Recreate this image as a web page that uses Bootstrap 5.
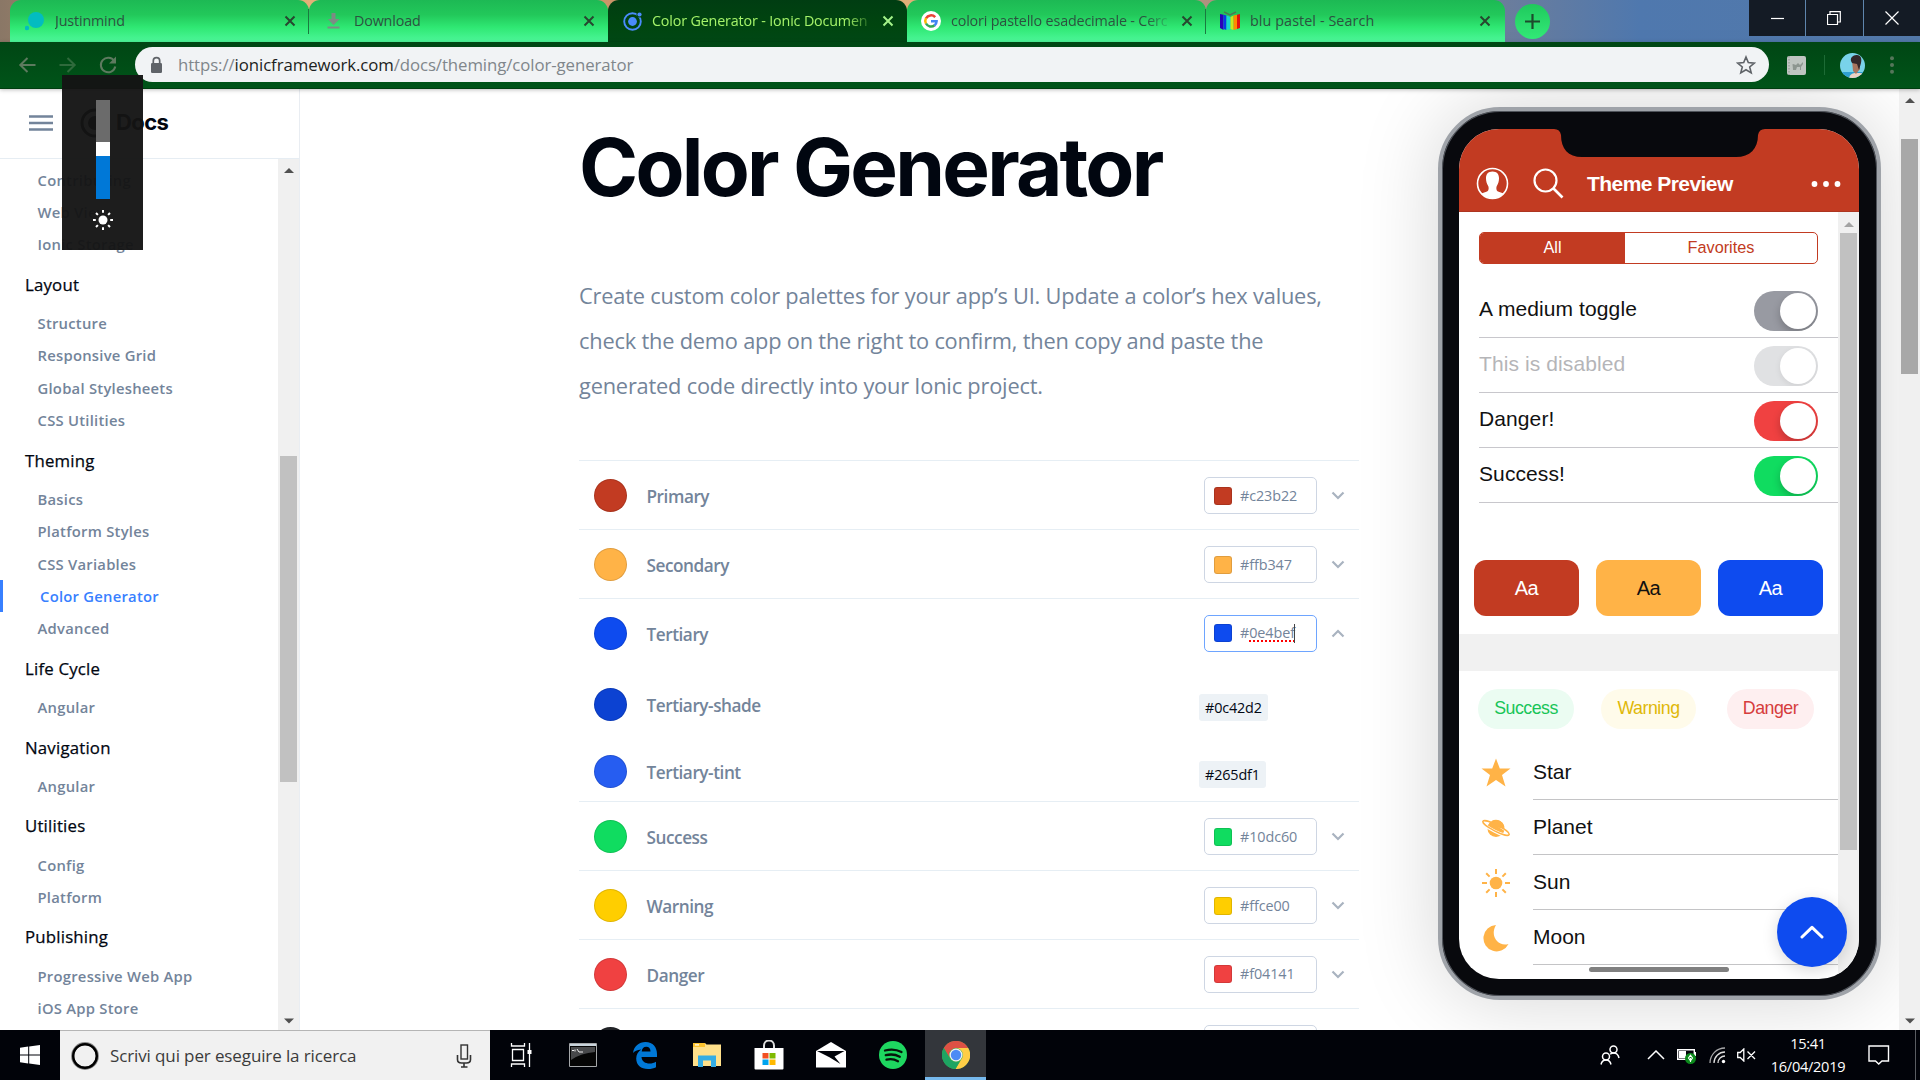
<!DOCTYPE html>
<html lang="en">
<head>
<meta charset="utf-8">
<title>Color Generator - Ionic Documentation</title>
<link href="https://cdn.jsdelivr.net/npm/bootstrap@5.3.0/dist/css/bootstrap.min.css" rel="stylesheet">
<style>
  body { width:1920px; height:1080px; overflow:hidden; font-family:"Open Sans","Noto Sans",sans-serif; background:#fff; color:#010610; }
  svg { display:block; flex:none; }
  .nw { white-space:nowrap; }
  /* tab strip */
  .tabstrip { height:42px; padding-left:10px; background:linear-gradient(90deg,#8a7766 0,#e3b078 310px,#c99468 620px,#e3b078 920px,#a58b80 1260px,#6b7d9c 1505px,#4f78ae 1640px,#5379a9 1920px); }
  .btab { width:299px; height:42px; padding-left:17px; padding-right:13px; border-radius:11px 11px 0 0; background:linear-gradient(180deg,#1db954 0,#22c85a 35%,#2fe873 65%,#4df79a 100%); color:#2c5240; font-size:14.3px; letter-spacing:-.15px; line-height:42px; position:relative; }
  .btab .ttl { flex:1; overflow:hidden; white-space:nowrap; margin-left:10px; margin-right:8px; }
  .btab.fade-end .ttl { letter-spacing:-.15px; -webkit-mask-image:linear-gradient(90deg,#000 88%,transparent 100%); }
  .btab.sep::after { content:""; position:absolute; right:0; top:9px; width:1px; height:25px; background:#1a7a40; }
  .btab.current { background:linear-gradient(180deg,#003d12,#00450f 60%,#004715); color:#a4f36a; }
  .plus { width:35px; height:35px; border-radius:50%; background:linear-gradient(#1fc95c,#33ea78); margin:4px 0 0 10px; }
  .winbtns { height:36px; margin-left:auto; background:#141b25; width:171px; }
  .winbtns > div { flex:1; border-left:1px solid #5f86ad; }
  .winbtns > div:first-child { border-left:0; }
  /* toolbar */
  .tbar { height:47px; background:linear-gradient(#004614,#005419); border-bottom:1px solid #003d10; padding-left:17px; box-shadow:0 1px 4px rgba(0,0,0,.25); position:relative; }
  .omni { width:1634px; height:35px; border-radius:18px; background:#f1f3f5; margin:0 0 1px 12px; padding:0 13px 0 14px; color:#80868b; font-size:16.8px; letter-spacing:-.15px; }
  .omni b { font-weight:400; color:#1c1e21; }
  /* page */
  .pagearea { height:941px; }
  .sideb { width:300px; border-right:1px solid #e9edf2; }
  .sidehead { height:70px; border-bottom:1px solid #e6edf3; padding:0 0 2px 29px; }
  .docs { font-family:Inter,sans-serif; font-weight:700; font-size:22px; letter-spacing:-.6px; }
  .sidelist { flex:1; padding-top:4.600px; overflow:hidden; }
  .sidelist a { display:block; height:32.4px; line-height:32px; padding-left:37.5px; font-size:14.8px; font-weight:600; letter-spacing:.25px; color:#73849a; text-decoration:none; white-space:nowrap; }
  .sidelist h6 { margin:0; height:46.3px; line-height:47px; padding-left:25px; font-size:16.8px; font-weight:500; color:#010610; letter-spacing:.2px; -webkit-text-stroke:.25px #010610; }
  .sidelist a.on { color:#3880ff; border-left:3px solid #3880ff; padding-left:37px; }
  .sbar { width:21px; background:#f0f0f0; padding:9px 0 6px; }
  .sbar .thumb { width:17px; background:#c1c1c1; }
  .content { width:1138px; padding:0 79px 0 279px; overflow:hidden; }
  .content h1 { font-family:Inter,"Liberation Sans",sans-serif; font-weight:700; font-size:80px; line-height:90px; letter-spacing:-2.75px; margin:33px 0 61px; white-space:nowrap; color:#010610; }
  .intro { font-size:21.8px; line-height:45px; letter-spacing:-.2px; color:#73849a; margin:0 0 52.400px; white-space:nowrap; }
  .crow { height:68.75px; border-top:1px solid #e6eef4; padding:1px 12px 0 15px; }
  .crow.subrow { height:67.4px; border:0; padding-top:8px; }
  .dot { width:33px; height:33px; border-radius:50%; border:1px solid rgba(0,0,0,.12); }
  .cname { margin-left:19.500px; padding-top:3px; font-size:17.2px; font-weight:600; letter-spacing:-.45px; color:#73849a; }
  .hexbox { margin-left:auto; width:113px; height:37px; border:1px solid #ced6e3; border-radius:5px; padding-left:9px; font-size:14.4px; letter-spacing:-.1px; color:#73849a; }
  .hexbox i { width:18px; height:18px; border-radius:3px; border:1px solid rgba(0,0,0,.12); margin-right:8px; }
  .hexbox.focus { border-color:#6ea5ff; }
  .hexbox u { text-decoration:underline dotted red 2px; text-underline-offset:2px; text-decoration-skip-ink:none; }
  .caret { width:1px; height:19px; background:#444; margin-left:-1px; }
  .chev { margin-left:14px; margin-right:2px; }
  .chipcol { width:160px; margin-left:auto; margin-right:-12px; }
  .chipcol span { display:inline-block; margin-top:6px; height:27px; line-height:27px; padding:0 6px; background:#edf2f6; border-radius:3px; font-size:14.4px; letter-spacing:-.15px; color:#020814; }
  /* phone */
  .phonecol { width:461px; padding-top:18px; }
  .phone { width:443px; height:893px; border-radius:62px; background:#08090d; border:4px solid #9fa3a9; padding:18px 17px 17px; box-shadow:0 0 80px rgba(0,0,0,.17),inset 0 0 0 1px #50545b; }
  .screen { position:relative; width:400px; height:850px; border-radius:40px; background:#fff; overflow:hidden; font-family:"Liberation Sans",Arial,sans-serif; color:#111; }
  .notch { position:absolute; left:95px; top:-1px; }
  .phead { height:83px; background:#c23b22; border-bottom:1px solid #ad3520; padding:27px 18px 0 17px; color:#fff; }
  .phead strong { font-size:21px; letter-spacing:-.55px; margin-left:23px; }
  .pbody { width:379px; }
  .seg { margin:20px 20px 19px; height:32px; border:1px solid #c23b22; border-radius:5px; overflow:hidden; font-size:16.25px; line-height:29px; text-align:center; color:#c23b22; }
  .seg .a { width:145px; background:#c23b22; color:#fff; }
  .trow { height:55px; margin-left:20px; padding-right:20px; border-bottom:1px solid #c8c7cc; font-size:21px; letter-spacing:.1px; }
  .trow > span:first-child { padding-bottom:2px; }
  .tog { width:64px; height:40px; border-radius:20px; padding:2px; margin-top:1px; overflow:hidden; }
  .tog i { display:block; width:36px; height:36px; margin-left:auto; border-radius:50%; background:#fff; box-shadow:0 4px 9px rgba(0,0,0,.22); }
  .abtns { margin:57px 0 18px 15px; gap:17px; }
  .abtns div { width:105px; height:56px; border-radius:12px; font-size:20px; letter-spacing:-.6px; line-height:56px; text-align:center; color:#fff; }
  .band { height:37px; background:#f1f1f1; }
  .pills { margin:18px 0 0 19px; height:40px; }
  .pills span { height:40px; line-height:38px; border-radius:20px; font-size:17.8px; letter-spacing:-.5px; text-align:center; }
  .irow { height:55px; }
  .irow .ic { width:74px; }
  .irow .tx { flex:1; height:55px; line-height:54px; border-bottom:1px solid #c4c4c6; font-size:21px; }
  .pscroll { position:absolute; right:0; top:83px; width:21px; height:767px; background:#f0f0f0; padding:10px 0 0 2px; }
  .pscroll .thumb { width:17px; height:617px; margin-top:5px; background:#c1c1c1; }
  .fab { position:absolute; left:318px; top:768px; width:70px; height:70px; border-radius:50%; background:#0e4bef; box-shadow:0 4px 16px rgba(0,0,0,.15); }
  .homebar { position:absolute; left:130px; top:838px; width:140px; height:5px; border-radius:3px; background:#808080; }
  /* brightness flyout */
  .flyout { position:absolute; left:62px; top:75px; width:81px; height:175px; background:rgba(20,20,20,.96); padding-top:25px; z-index:5; }
  .flyout .lv { width:14px; }
  /* taskbar */
  .taskb { height:50px; background:#010309; }
  .searchb { width:430px; background:#f1f1f1; border-top:1px solid #b5b5b5; padding:0 18px 0 10px; font-size:17px; letter-spacing:-.12px; color:#3b3b3b; }
  .tk { width:62px; height:50px; }
  .tk.act { background:#33363b; border-bottom:3px solid #76b9ed; padding-top:3px; margin-left:1px; width:61px; }
  .clock { width:120px; text-align:center; color:#fff; font-size:14.6px; line-height:23px; letter-spacing:-.3px; }
</style>
</head>
<body class="d-flex flex-column position-relative">

<header class="tabstrip d-flex flex-shrink-0">
  <div class="btab sep d-flex align-items-center" style="padding-left:15px">
    <svg width="20" height="22" viewBox="0 0 20 22"><circle cx="11" cy="10" r="8" fill="#03bcc0"/><circle cx="2" cy="18" r="2.2" fill="#03bcc0"/></svg>
    <span class="ttl">Justinmind</span>
    <svg width="12" height="12" viewBox="0 0 12 12"><path d="M1.5 1.5l9 9M10.500 1.500l-9 9" stroke="#27472f" stroke-width="2"/></svg>
  </div>
  <div class="btab d-flex align-items-center">
    <svg width="16" height="16" viewBox="0 0 16 16"><path d="M5.500 0h4v6h4L7.500 12 2 6h3.500zM1.500 13.500h12v2h-12z" fill="#7d8b84"/></svg>
    <span class="ttl" style="margin-left:12px">Download</span>
    <svg width="12" height="12" viewBox="0 0 12 12"><path d="M1.500 1.500l9 9M10.500 1.500l-9 9" stroke="#27472f" stroke-width="2"/></svg>
  </div>
  <div class="btab current fade-end d-flex align-items-center" style="padding-left:15px">
    <svg width="20" height="20" viewBox="0 0 20 20"><circle cx="9.500" cy="10.500" r="8.300" fill="none" stroke="#4a8bfc" stroke-width="1.900"/><circle cx="9.500" cy="10.500" r="4.400" fill="#4a8bfc"/><circle cx="16.500" cy="3.500" r="3" fill="#004212"/><circle cx="16.500" cy="3.500" r="2.100" fill="#4a8bfc"/></svg>
    <span class="ttl" style="margin-left:9px">Color Generator - Ionic Documen</span>
    <svg width="12" height="12" viewBox="0 0 12 12"><path d="M1.500 1.500l9 9M10.500 1.500l-9 9" stroke="#a4f38a" stroke-width="2"/></svg>
  </div>
  <div class="btab fade-end sep d-flex align-items-center" style="padding-left:14px">
    <svg width="20" height="20" viewBox="0 0 20 20"><circle cx="10" cy="10" r="10" fill="#fff"/><g fill="none" stroke-width="2.500"><path d="M14.200 6.200A5.700 5.700 0 0 0 5 7.300" stroke="#ea4335"/><path d="M5 7.200a5.700 5.700 0 0 0 0 5.500" stroke="#fbbc05"/><path d="M5 12.500a5.700 5.700 0 0 0 8.600 1.800" stroke="#34a853"/><path d="M13.500 14.400a5.500 5.500 0 0 0 2.100-4.200H10" stroke="#4285f4"/></g></svg>
    <span class="ttl">colori pastello esadecimale - Cerc</span>
    <svg width="12" height="12" viewBox="0 0 12 12"><path d="M1.500 1.500l9 9M10.500 1.500l-9 9" stroke="#27472f" stroke-width="2"/></svg>
  </div>
  <div class="btab d-flex align-items-center" style="padding-left:14px;padding-right:14px">
    <svg width="20" height="20" viewBox="0 0 20 20"><path d="M0 3l3.500.800V19L0 17z" fill="#2a00b8"/><path d="M3.500 3.800l3 .7V19l-3-1z" fill="#0838e8"/><path d="M6.500 4.500l4 1.500v12l-4 1z" fill="#18d8d0"/><path d="M10.500 6l3-1.500V19l-3-1z" fill="#c8e820"/><path d="M13.500 4.500l3.500-.7V18l-3.500 1z" fill="#ff8a00"/><path d="M17 3.800l3-.8v14l-3 1z" fill="#e01010"/><path d="M4 1l6 3 6-3" fill="none" stroke="#4d7a55" stroke-width="1.500"/></svg>
    <span class="ttl" style="letter-spacing:.1px">blu pastel - Search</span>
    <svg width="12" height="12" viewBox="0 0 12 12"><path d="M1.500 1.500l9 9M10.500 1.500l-9 9" stroke="#27472f" stroke-width="2"/></svg>
  </div>
  <div class="plus d-flex align-items-center justify-content-center"><svg width="15" height="15" viewBox="0 0 15 15"><path d="M7.500 0v15M0 7.500h15" stroke="#1d4b2c" stroke-width="2.200"/></svg></div>
  <div class="winbtns d-flex">
    <div class="d-flex align-items-center justify-content-center"><svg width="13" height="13" viewBox="0 0 13 13"><path d="M0 6.500h13" stroke="#fff" stroke-width="1.200"/></svg></div>
    <div class="d-flex align-items-center justify-content-center"><svg width="14" height="14" viewBox="0 0 14 14"><path d="M.500 3.500h10v10H.500zM3 3.500V.700h10.300V11h-2.800" fill="none" stroke="#fff" stroke-width="1.200"/></svg></div>
    <div class="d-flex align-items-center justify-content-center"><svg width="14" height="14" viewBox="0 0 14 14"><path d="M.500.500l13 13M13.500.500l-13 13" stroke="#fff" stroke-width="1.200"/></svg></div>
  </div>
</header>

<div class="tbar d-flex align-items-center flex-shrink-0">
  <svg width="20" height="20" viewBox="0 0 20 20"><path d="M18.500 10H3.500M10.500 3L3.300 10l7.200 7" fill="none" stroke="#5d7a5f" stroke-width="2"/></svg>
  <svg width="20" height="20" viewBox="0 0 20 20" style="margin-left:21px"><path d="M1.500 10h15M9.500 3l7.200 7-7.200 7" fill="none" stroke="#2f6a3c" stroke-width="2"/></svg>
  <svg width="20" height="20" viewBox="0 0 20 20" style="margin-left:20px;margin-right:5px"><path d="M16.300 6A7.300 7.300 0 1 0 17.300 11.500" fill="none" stroke="#5d7a5f" stroke-width="2"/><path d="M18 1.500v7h-7z" fill="#5d7a5f"/></svg>
  <div class="omni d-flex align-items-center">
    <svg width="15" height="18" viewBox="0 0 15 18"><rect x="2" y="7" width="11" height="10" rx="1.200" fill="#5f6368"/><path d="M4.300 7V4.800a3.200 3.200 0 0 1 6.400 0V7" fill="none" stroke="#5f6368" stroke-width="1.700"/></svg>
    <span class="nw" style="margin-left:14px;letter-spacing:-.08px">https://<b>ionicframework.com</b>/docs/theming/color-generator</span>
    <svg class="ms-auto" width="20" height="20" viewBox="0 0 20 20"><path d="M10 2l2.300 5.600 6 .5-4.600 3.900 1.500 5.900L10 14.700l-5.200 3.200 1.500-5.900L1.700 8.100l6-.5z" fill="none" stroke="#5f6368" stroke-width="1.600"/></svg>
  </div>
  <svg width="21" height="21" viewBox="0 0 21 21" style="margin-left:17px"><rect x="1" y="1" width="19" height="19" rx="2" fill="#bfc5c1"/><path d="M3 1v19" stroke="#8c948e" stroke-dasharray="1.500 1.500"/><path d="M7 15c0-4-1-6 0-6l3 1 2-2 2 2 3-3v2l-2 3v3h-1v-3h-3l-1 3z" fill="#8d9690"/></svg>
  <div style="width:1px;height:20px;background:#1d6b35;margin-left:17px"></div>
  <svg width="25" height="25" viewBox="0 0 25 25" style="margin-left:15px"><defs><clipPath id="av"><circle cx="12.500" cy="12.500" r="12.500"/></clipPath></defs><g clip-path="url(#av)"><path fill="#79d3ea" d="M0 0h25v25H0z"/><path d="M0 19h25v6H0z" fill="#2f9fd0"/><path d="M9 25c1-4 4-5 7-5s8 0 9 1v4z" fill="#ecd2c4"/><path d="M12 7h7l1 9-4 5-3-3z" fill="#a8745e"/><path d="M11 8c-1-5 4-6 6-6 4 0 5 4 4 8l-2 7-2-6-5-1z" fill="#33272a"/></g></svg>
  <svg width="6" height="18" viewBox="0 0 6 18" style="margin-left:24px"><g fill="#55765a"><circle cx="3" cy="2.300" r="2"/><circle cx="3" cy="9" r="2"/><circle cx="3" cy="15.700" r="2"/></g></svg>
</div>

<main class="pagearea d-flex flex-shrink-0">
  <nav class="sideb d-flex flex-column flex-shrink-0">
    <div class="sidehead d-flex align-items-center">
      <svg width="24" height="18" viewBox="0 0 24 18"><path d="M0 2.500h24M0 9h24M0 15.500h24" stroke="#73849a" stroke-width="2.400"/></svg>
      <svg width="32" height="32" viewBox="0 0 32 32" style="margin-left:27px"><circle cx="15" cy="16" r="13" fill="none" stroke="#010610" stroke-width="3"/><circle cx="15" cy="16" r="7" fill="#010610"/></svg>
      <span class="docs" style="margin-left:4px">Docs</span>
    </div>
    <div class="d-flex overflow-hidden flex-grow-1">
      <div class="sidelist">
        <a href="#">Contributing</a><a href="#">Web View</a><a href="#">Ionic Storage</a>
        <h6>Layout</h6><a href="#">Structure</a><a href="#">Responsive Grid</a><a href="#">Global Stylesheets</a><a href="#">CSS Utilities</a>
        <h6>Theming</h6><a href="#">Basics</a><a href="#">Platform Styles</a><a href="#">CSS Variables</a><a href="#" class="on">Color Generator</a><a href="#">Advanced</a>
        <h6>Life Cycle</h6><a href="#">Angular</a>
        <h6>Navigation</h6><a href="#">Angular</a>
        <h6>Utilities</h6><a href="#">Config</a><a href="#">Platform</a>
        <h6>Publishing</h6><a href="#">Progressive Web App</a><a href="#">iOS App Store</a>
      </div>
      <div class="sbar d-flex flex-column align-items-center">
        <svg width="10" height="6" viewBox="0 0 10 6"><path d="M5 0l5 5H0z" fill="#505050"/></svg>
        <div class="thumb" style="height:326px;margin-top:282px"></div>
        <svg class="mt-auto" width="10" height="6" viewBox="0 0 10 6"><path d="M5 5.500L0 .500h10z" fill="#505050"/></svg>
      </div>
    </div>
  </nav>

  <section class="content flex-shrink-0">
    <h1>Color Generator</h1>
    <p class="intro">Create custom color palettes for your app’s UI. Update a color’s hex values,<br>check the demo app on the right to confirm, then copy and paste the<br>generated code directly into your Ionic project.</p>
    <div id="colors"></div>
  </section>

  <aside class="phonecol flex-shrink-0">
    <div class="phone">
      <div class="screen">
        <div class="phead d-flex align-items-center">
          <svg width="33" height="33" viewBox="0 0 33 33"><defs><clipPath id="us"><circle cx="16.500" cy="16.500" r="15"/></clipPath></defs><circle cx="16.500" cy="16.500" r="15" fill="none" stroke="#fff" stroke-width="1.600"/><path clip-path="url(#us)" d="M16.500 4.500c4.500 0 6.700 3 6.500 7 0 3-.8 5-2.200 7.500-.8 2-.6 4.500 1.200 5.500l7 2.500-5 6H9l-5-6 7-2.500c1.800-1 2-3.500 1.200-5.500C10.800 16.500 10 14.500 10 11.500c-.2-4 2-7 6.500-7z" fill="#fff"/></svg>
          <svg width="31" height="31" viewBox="0 0 31 31" style="margin-left:24px"><circle cx="12.500" cy="12.500" r="11" fill="none" stroke="#fff" stroke-width="2.200"/><path d="M20.500 20.500l9 9" stroke="#fff" stroke-width="2.600"/></svg>
          <strong class="nw">Theme Preview</strong>
          <svg class="ms-auto" width="30" height="8" viewBox="0 0 30 8"><g fill="#fff"><circle cx="3.500" cy="4" r="2.900"/><circle cx="15" cy="4" r="2.900"/><circle cx="26.500" cy="4" r="2.900"/></g></svg>
        </div>
        <div class="pbody">
          <div class="seg d-flex"><div class="a">All</div><div class="flex-fill">Favorites</div></div>
          <div class="trow d-flex align-items-center justify-content-between"><span>A medium toggle</span><span class="tog" style="background:#989aa2"><i></i></span></div>
          <div class="trow d-flex align-items-center justify-content-between"><span style="color:#b5b5b8">This is disabled</span><span class="tog" style="background:#e0e1e3"><i style="box-shadow:0 2px 6px rgba(0,0,0,.08)"></i></span></div>
          <div class="trow d-flex align-items-center justify-content-between"><span>Danger!</span><span class="tog" style="background:#f04141"><i></i></span></div>
          <div class="trow d-flex align-items-center justify-content-between"><span>Success!</span><span class="tog" style="background:#10dc60"><i></i></span></div>
          <div class="abtns d-flex"><div style="background:#c23b22">Aa</div><div style="background:#ffb347;color:#111">Aa</div><div style="background:#0e4bef">Aa</div></div>
          <div class="band"></div>
          <div class="pills d-flex"><span style="width:96px;background:#ebfcf2;color:#18c558">Success</span><span style="width:95px;margin-left:27px;background:#fffbea;color:#e0b808">Warning</span><span style="width:87px;margin-left:31px;background:#feeff0;color:#d63c3c">Danger</span></div>
          <div style="height:16px"></div>
          <div class="irow d-flex align-items-center"><div class="ic"><svg class="mx-auto" width="30" height="29" viewBox="0 0 30 29"><path d="M15 .500l3.800 10h10.700l-8.500 6.600 3.500 11.400L15 22l-9.500 6.500L9 17.100.500 10.500h10.700z" fill="#ffb347"/></svg></div><div class="tx">Star</div></div>
          <div class="irow d-flex align-items-center"><div class="ic"><svg class="mx-auto" width="30" height="20" viewBox="0 0 30 20"><circle cx="15" cy="10.500" r="8.500" fill="#ffb347"/><ellipse cx="15" cy="10" rx="15" ry="3.500" transform="rotate(27 15 10)" fill="none" stroke="#fff" stroke-width="3"/><ellipse cx="15" cy="10" rx="14.700" ry="3.200" transform="rotate(27 15 10)" fill="none" stroke="#ffb347" stroke-width="1.500"/><path d="M7 7.500A8.500 8.500 0 0 1 23.500 11z" fill="#ffb347"/></svg></div><div class="tx">Planet</div></div>
          <div class="irow d-flex align-items-center"><div class="ic"><svg class="mx-auto" width="28" height="28" viewBox="0 0 28 28"><circle cx="14" cy="14" r="6.300" fill="#ffb347"/><path d="M14 0v5M14 23v5M0 14h5M23 14h5M4.200 4.200l3.400 3.400M20.400 20.400l3.400 3.400M4.200 23.800l3.400-3.400M20.400 7.600l3.400-3.400" stroke="#ffb347" stroke-width="2"/></svg></div><div class="tx">Sun</div></div>
          <div class="irow d-flex align-items-center"><div class="ic"><svg class="mx-auto" width="26" height="28" viewBox="0 0 26 28"><path d="M13 1A13.200 13.200 0 1 0 25.500 20C15 23 6.500 12 13 1z" fill="#ffb347"/></svg></div><div class="tx">Moon</div></div>
        </div>
        <div class="pscroll">
          <svg width="10" height="6" viewBox="0 0 10 6" style="margin-left:4px"><path d="M5 0l5 5H0z" fill="#a3a3a3"/></svg>
          <div class="thumb"></div>
        </div>
        <svg class="notch" width="211" height="30" viewBox="0 0 211 30"><path d="M0 0h211v1q-6 0-7 6c0 14-8 22-22 22H28C14 29 7 21 7 7Q6 1 0 1z" fill="#08090d"/></svg>
        <div class="homebar"></div>
        <div class="fab d-flex align-items-center justify-content-center"><svg width="24" height="14" viewBox="0 0 24 14"><path d="M2 12L12 2.300 22 12" fill="none" stroke="#fff" stroke-width="3" stroke-linecap="round" stroke-linejoin="round"/></svg></div>
      </div>
    </div>
  </aside>

  <div class="sbar d-flex flex-column align-items-center flex-shrink-0">
    <svg width="10" height="6" viewBox="0 0 10 6"><path d="M5 0l5 5H0z" fill="#505050"/></svg>
    <div class="thumb" style="height:235px;margin-top:35px;background:#a8a8a8"></div>
    <svg class="mt-auto" width="10" height="6" viewBox="0 0 10 6"><path d="M5 5.500L0 .500h10z" fill="#505050"/></svg>
  </div>
</main>

<footer class="taskb d-flex align-items-center flex-shrink-0">
  <svg width="60" height="20" viewBox="0 0 60 20"><path d="M20 2.800l8.200-1.200v7.900H20zM29.200 1.500L40 0v9.500H29.200zM20 10.500h8.200v7.900L20 17.200zM29.200 10.500H40V20l-10.800-1.500z" fill="#fff"/></svg>
  <div class="searchb d-flex align-items-center align-self-stretch">
    <svg width="30" height="30" viewBox="0 0 30 30"><circle cx="15" cy="15" r="12.300" fill="none" stroke="#888" stroke-width="3.200"/><circle cx="15" cy="15" r="11.800" fill="none" stroke="#000" stroke-width="2.400"/></svg>
    <span class="nw" style="margin-left:10px">Scrivi qui per eseguire la ricerca</span>
    <svg class="ms-auto" width="16" height="24" viewBox="0 0 16 24"><rect x="5" y="1" width="6.500" height="14" fill="none" stroke="#333" stroke-width="1.400"/><path d="M1.500 11v4.500q0 3.500 4 3.500h5q4 0 4-3.500V11M8 19v3.500M5 23h6.500" fill="none" stroke="#333" stroke-width="1.600"/></svg>
  </div>
  <div class="tk d-flex align-items-center justify-content-center"><svg width="22" height="24" viewBox="0 0 22 24"><g fill="none" stroke="#fff" stroke-width="1.300"><path d="M2.500 6.500h11v11h-11zM1.500 0v3h13V0M1.500 24v-3h13v3M19.500 0v24"/></g><path d="M17.500 7h4v4h-4z" fill="#fff"/></svg></div>
  <div class="tk d-flex align-items-center justify-content-center"><svg width="28" height="24" viewBox="0 0 28 24"><path d="M.500.500h27v23H.500z" fill="#050505" stroke="#a5a8aa"/><path d="M1 1h26v2H1z" fill="#c9d4dc"/><path d="M2 4h24v5Q12 10 2 17z" fill="#48494b"/><path d="M3 7.500h2M6 6.500v2M8 6l2 3h4" stroke="#eee" fill="none"/></svg></div>
  <div class="tk d-flex align-items-center justify-content-center"><svg width="26" height="28" viewBox="0 0 26 28"><path d="M1 12C2 5 7 1 13.500 1 21 1 25 6.500 25 13v3H9.500c.3 4.500 4 6.500 8 6.500 2.500 0 4.800-.8 6.500-1.800v5.500C22 27.300 19 28 16 28 9 28 4.200 24 4.200 17.500c0-4 2-7 5-9C5 9 2.500 10 1 12zm8.700-1.500h8.800c0-3-1.500-4.700-4.200-4.700s-4.300 2-4.600 4.700z" fill="#0078d7"/></svg></div>
  <div class="tk d-flex align-items-center justify-content-center"><svg width="28" height="24" viewBox="0 0 28 24"><path d="M0 0h12l1.500 1.500H28V23H0z" fill="#ffe08a"/><path d="M0 0h12v4H0z" fill="#fdc32e"/><path d="M5 24V12.500h18V24h-5v-6.500h-8V24z" fill="#35ade4"/><path d="M2 1.300h4v1.200H2z" fill="#fff"/></svg></div>
  <div class="tk d-flex align-items-center justify-content-center"><svg width="30" height="30" viewBox="0 0 30 30"><path d="M10 9V5.500a5 5 0 0 1 10 0V9" fill="none" stroke="#ddd" stroke-width="2"/><path d="M.500 8h29v20.500q0 1-1 1h-27q-1 0-1-1z" fill="#fff"/><path d="M8.500 13h6v5.500h-6z" fill="#f25022"/><path d="M15.500 13h6v5.500h-6z" fill="#7fba00"/><path d="M8.500 19.500h6V25h-6z" fill="#00a4ef"/><path d="M15.500 19.500h6V25h-6z" fill="#ffb900"/></svg></div>
  <div class="tk d-flex align-items-center justify-content-center"><svg width="30" height="26" viewBox="0 0 30 26"><path d="M0 9L15 0l15 9v16.500H0z" fill="#fff"/><path d="M1 9h27.500l-10 5.500 6 7.500L13 15z" fill="#010309"/></svg></div>
  <div class="tk d-flex align-items-center justify-content-center"><svg width="28" height="28" viewBox="0 0 28 28"><circle cx="14" cy="14" r="14" fill="#1ed760"/><path d="M6 9.500q9-2.500 16.500 1.500M6.800 14.200q7.500-2 14 1.500M7.500 18.700q6-1.600 11.500 1.500" fill="none" stroke="#06150a" stroke-width="2.300" stroke-linecap="round"/></svg></div>
  <div class="tk act d-flex align-items-center justify-content-center"><svg width="28" height="28" viewBox="0 0 28 28"><circle cx="14" cy="14" r="14" fill="#4caf50"/><path d="M1.800 7A14 14 0 0 1 26.200 7H14a7 7 0 0 0-6.300 10z" fill="#dd5144"/><path d="M26.200 7A14 14 0 0 1 13.500 28l6.700-11A7 7 0 0 0 14 7z" fill="#ffcd46"/><path d="M1.800 7A14 14 0 0 0 13.500 28l4.500-8a7 7 0 0 1-10.300-3z" fill="#1da462"/><circle cx="14" cy="14" r="6.500" fill="#f1f1f1"/><circle cx="14" cy="14" r="5.200" fill="#4c8bf5"/></svg></div>
  <div class="ms-auto d-flex align-items-center">
    <svg width="20" height="20" viewBox="0 0 20 20"><g fill="none" stroke="#fff" stroke-width="1.500"><circle cx="13.500" cy="4.500" r="3.500"/><path d="M19 13q-1-5-5.500-5-2 0-3.300 1.200"/><circle cx="6" cy="11.500" r="3.500"/><path d="M1 19.500q1-4.500 5-4.500t5 4.500"/></g></svg>
    <svg width="18" height="10" viewBox="0 0 18 10" style="margin-left:27px"><path d="M1 9l8-8 8 8" fill="none" stroke="#fff" stroke-width="1.500"/></svg>
    <svg width="20" height="17" viewBox="0 0 20 17" style="margin-left:12px"><path d="M.700 2.700h16.600v9.600H.700z" fill="none" stroke="#fff" stroke-width="1.400"/><path d="M2 4h7v7H2zM17 5h2v4h-2z" fill="#fff"/><circle cx="13.500" cy="11.500" r="5.500" fill="#0c8a1c"/><path d="M13.500 8.200l2 2.800-2 2.800-2-2.800zM13.500 11v4" fill="none" stroke="#fff" stroke-width="1.100"/></svg>
    <svg width="17" height="17" viewBox="0 0 17 17" style="margin-left:12px"><g fill="none" stroke="#ddd" stroke-width="1.300"><path d="M1 16A15 15 0 0 1 16 1" opacity=".75"/><path d="M5 16A11 11 0 0 1 16 5"/><path d="M9 16a7 7 0 0 1 7-7"/></g><circle cx="14.500" cy="14.500" r="1.700" fill="#fff"/></svg>
    <svg width="19" height="14" viewBox="0 0 19 14" style="margin-left:11px"><path d="M.700 4.500h2.500L6.800 1v12L3.200 9.500H.700zM10.500 3.500l7.500 7.500M18 3.500L10.500 11" fill="none" stroke="#fff" stroke-width="1.300"/></svg>
    <div class="clock" style="margin-left:-8px">15:41<br>16/04/2019</div>
    <svg width="22" height="20" viewBox="0 0 22 20"><path d="M1 1h19.500v15h-6.500l-3.300 3-3.200-3H1z" fill="none" stroke="#fff" stroke-width="1.400"/></svg>
    <div style="width:1px;height:50px;background:#5a5d62;margin-left:25px;margin-right:4px"></div>
  </div>
</footer>

<div class="flyout d-flex flex-column align-items-center">
  <div class="lv" style="height:42px;background:#6b6b6b"></div>
  <div class="lv" style="height:14px;background:#fff"></div>
  <div class="lv" style="height:43px;background:#0078d7"></div>
  <svg width="20" height="20" viewBox="0 0 20 20" style="margin-top:11px"><circle cx="10" cy="10" r="4.500" fill="#fff"/><path d="M10 0v2.800M10 17.200V20M0 10h2.800M17.200 10H20M3 3l1.900 1.900M15.100 15.100L17 17M3 17l1.900-1.900M15.100 4.900L17 3" stroke="#fff" stroke-width="2"/></svg>
</div>

<script src="https://cdn.jsdelivr.net/npm/bootstrap@5.3.0/dist/js/bootstrap.bundle.min.js"></script>
<script>
  const rows = [
    ['Primary', '#c23b22'], ['Secondary', '#ffb347'], ['Tertiary', '#0e4bef', 'open'],
    ['Tertiary-shade', '#0c42d2', 'sub'], ['Tertiary-tint', '#265df1', 'sub'],
    ['Success', '#10dc60'], ['Warning', '#ffce00'], ['Danger', '#f04141'], ['', '#222428']
  ];
  document.getElementById('colors').innerHTML = rows.map(([name, hex, kind]) => {
    const head = `<span class="dot" style="background:${hex}"></span><span class="cname">${name}</span>`;
    if (kind === 'sub') return `<div class="crow subrow d-flex align-items-center">${head}<div class="chipcol"><span>${hex}</span></div></div>`;
    const open = kind === 'open';
    const text = open ? `#<u>${hex.slice(1)}</u><span class="caret"></span>` : (name ? hex : '');
    const d = open ? 'M1.500 7.500L7 2l5.500 5.500' : 'M1.500 1.500L7 7l5.500-5.500';
    return `<div class="crow d-flex align-items-center">${head}<div class="hexbox d-flex align-items-center ${open ? 'focus' : ''}"><i style="background:${hex}"></i>${text}</div>
      <svg class="chev" width="14" height="9" viewBox="0 0 14 9"><path d="${d}" fill="none" stroke="#a9b3c0" stroke-width="2.200"/></svg></div>`;
  }).join('');
</script>
</body>
</html>
